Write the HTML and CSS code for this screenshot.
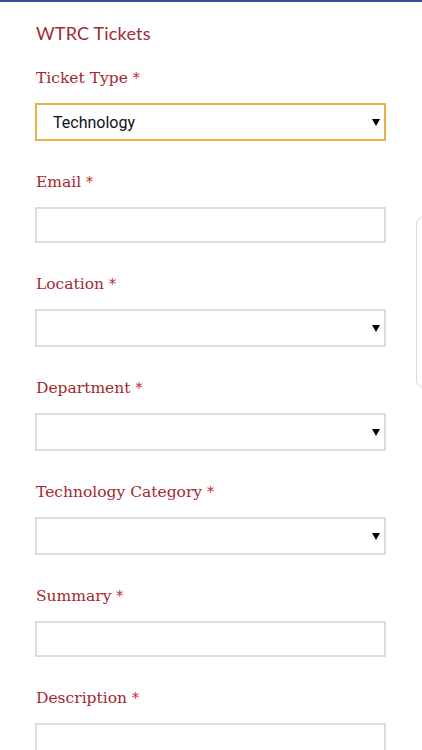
FILE: index.html
```html
<!DOCTYPE html>
<html lang="en">
<head>
<meta charset="utf-8">
<title>WTRC Tickets</title>
<link rel="stylesheet" href="styles.css">
</head>
<body>
<div class="page">
  <h1 class="title">WTRC Tickets</h1>
  <form class="form">
    <div class="field">
      <label class="label">Ticket Type <span class="req">*</span></label>
      <div class="select-wrap focused">
        <select class="control select"><option>Technology</option></select>
      </div>
    </div>
    <div class="field">
      <label class="label">Email <span class="req">*</span></label>
      <input class="control input" type="text">
    </div>
    <div class="field">
      <label class="label">Location <span class="req">*</span></label>
      <div class="select-wrap">
        <select class="control select"><option></option></select>
      </div>
    </div>
    <div class="field">
      <label class="label">Department <span class="req">*</span></label>
      <div class="select-wrap">
        <select class="control select"><option></option></select>
      </div>
    </div>
    <div class="field">
      <label class="label">Technology Category <span class="req">*</span></label>
      <div class="select-wrap">
        <select class="control select"><option></option></select>
      </div>
    </div>
    <div class="field">
      <label class="label">Summary <span class="req">*</span></label>
      <input class="control input" type="text">
    </div>
    <div class="field">
      <label class="label">Description <span class="req">*</span></label>
      <textarea class="control textarea"></textarea>
    </div>
  </form>
  <div class="side-tab"></div>
</div>
</body>
</html>
```
FILE: styles.css
```css
* { box-sizing: border-box; }
html, body { margin: 0; padding: 0; background: #fff; }
body { border-top: 2px solid #3a4aa0; overflow: hidden; height: 750px; }
.page { position: relative; padding: 19px 36px 0 35px; }
.title {
  margin: 0;
  font-family: "Lato", "DejaVu Sans", sans-serif;
  font-weight: 400;
  font-size: 18px;
  line-height: 24px;
  letter-spacing: 0.2px;
  color: #a22a33;
  padding-left: 1px;
}
.form { margin-top: 21px; display: flex; flex-direction: column; }
.field { display: flex; flex-direction: column; margin-bottom: 29px; }
.label {
  font-family: "DejaVu Serif", serif;
  font-size: 15.5px;
  line-height: 24px;
  color: #a4272f;
  margin-bottom: 13px;
  padding-left: 1px;
}
.req { color: #c3262c; font-size: 14px; }
.control {
  display: block;
  width: 100%;
  border: 2px solid #dedede;
  background: #fff;
  border-radius: 0;
  margin: 0;
  font-family: "Roboto", "Liberation Sans", sans-serif;
  font-size: 16px;
  color: #111;
  outline: none;
}
.input { height: 36px; }
.textarea { height: 80px; resize: none; }
.select-wrap { position: relative; }
.select {
  -webkit-appearance: none;
  appearance: none;
  height: 38px;
  padding: 0 30px 0 16px;
}
.focused .select { border-color: #e7b04a; }
.select-wrap::after {
  content: "";
  position: absolute;
  right: 6px;
  top: 16px;
  width: 0;
  height: 0;
  border-left: 4px solid transparent;
  border-right: 4px solid transparent;
  border-top: 7px solid #000;
}
.side-tab {
  position: absolute;
  top: 214px;
  left: 416px;
  width: 20px;
  height: 172px;
  border: 1px solid #d8d8d8;
  border-radius: 8px;
  background: #fff;
}
```
